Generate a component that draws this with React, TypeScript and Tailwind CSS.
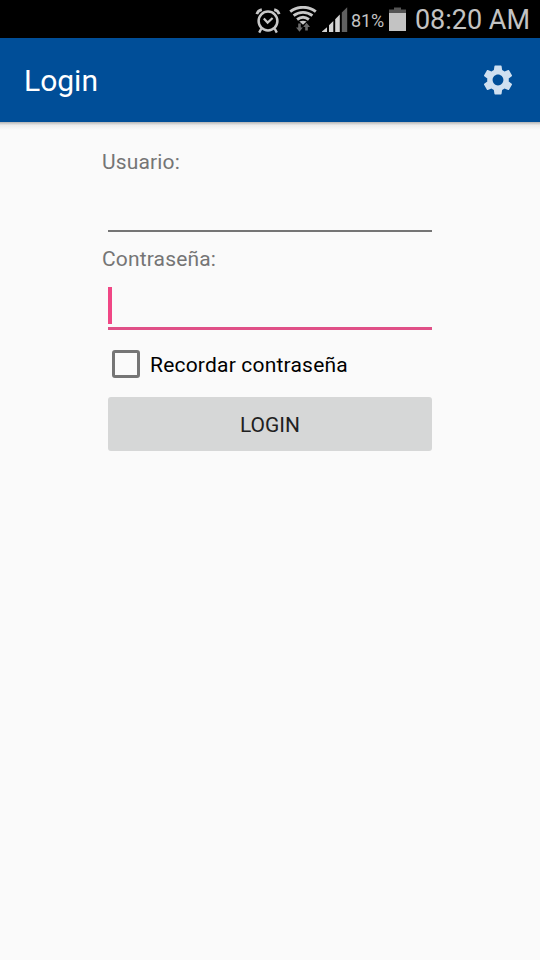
import { useState } from "react";
import { MdSettings } from "react-icons/md";

function AlarmIcon() {
  return (
    <svg width="26" height="27" viewBox="0 0 26 27" fill="none" stroke="#c8c8c8">
      <circle cx="13" cy="14" r="9.4" strokeWidth="2.5" />
      <path d="M8.8 11.6 12.6 15.6 17.6 11" strokeWidth="2.2" />
      <path d="M1.8 7.2C2.5 4.8 4.2 3.1 6.8 2.6M24.2 7.2C23.5 4.8 21.8 3.1 19.2 2.6" strokeWidth="2.7" />
      <path d="M6.4 21.5 4.2 25.6M19.6 21.5 21.8 25.6" strokeWidth="2.4" />
    </svg>
  );
}

function WifiIcon() {
  return (
    <svg width="28" height="27" viewBox="0 0 28 27" fill="none">
      <g stroke="#c8c8c8" strokeWidth="2.9">
        <path d="M1.2 5.6C8.6 -0.1 19.4 -0.1 26.8 5.6" />
        <path d="M4.6 9.6C10.2 5.3 17.8 5.3 23.4 9.6" />
        <path d="M8.1 13.5C11.7 10.8 16.3 10.8 19.9 13.5" />
      </g>
      <path d="M10.4 15.6C12.6 14.4 15.4 14.4 17.6 15.6L14 18.8Z" fill="#c8c8c8" />
      <path d="M9.2 17.5H11.8V21.6H13.8L10.5 25.8 7 21.6H9.2Z" fill="#6b6b6b" />
      <path d="M16.2 24.6H18.8V21H21L17.5 16.8 14.2 21H16.2Z" fill="#6b6b6b" />
    </svg>
  );
}

function SignalIcon() {
  return (
    <svg width="26" height="26" viewBox="0 0 26 26" fill="#d4d4d4">
      <path d="M0 25V24.6L5 20.2V25Z" />
      <path d="M7 25V18.2L11.3 14V25Z" />
      <path d="M13.2 25V12.2L17.8 7.6V25Z" />
      <path d="M19.8 25V5.6L25.2 0.2V25Z" fill="#606060" />
    </svg>
  );
}

function BatteryIcon() {
  return (
    <svg width="17" height="25" viewBox="0 0 17 25">
      <path d="M5 0.5H12V2.5H17V7H0V2.5H5Z" fill="#555" />
      <path d="M0 6H17V24H0Z" fill="#c3c3c3" />
    </svg>
  );
}

function StatusBar() {
  return (
    <div className="flex h-[38px] items-center justify-end bg-black pr-[10px] text-[#c3c3c3]">
      <div className="pt-[3px]">
        <AlarmIcon />
      </div>
      <div className="ml-2">
        <WifiIcon />
      </div>
      <div className="ml-[5px] pt-[2px]">
        <SignalIcon />
      </div>
      <span className="ml-[3px] w-[34px] pt-[4px] text-[18px] leading-none tracking-[-0.1px] whitespace-nowrap">81%</span>
      <div className="ml-[4px] pt-px">
        <BatteryIcon />
      </div>
      <span className="ml-[9px] pt-[3px] text-[27px] leading-none whitespace-nowrap">08:20 AM</span>
    </div>
  );
}

export default function App() {
  const [remember, setRemember] = useState(false);

  return (
    <div className="flex h-[960px] w-[540px] flex-col overflow-hidden bg-[#fafafa] font-[Roboto,sans-serif]">
      <StatusBar />

      {/* Toolbar */}
      <header className="flex h-[84px] shrink-0 items-center justify-between bg-[#004e98] pr-6 pl-6">
        <h1 className="pt-0.5 text-[30px] leading-9 text-white">Login</h1>
        <button type="button" aria-label="Ajustes" className="text-[#d0e0f0]">
          <MdSettings className="size-9" />
        </button>
      </header>
      <div className="h-2 shrink-0 bg-gradient-to-b from-[#b4b4b4] via-[#ececec] via-40% to-[#fafafa]" />

      {/* Login form */}
      <form className="mx-auto flex w-[336px] flex-col pt-5">
        <label className="text-[21px] leading-[25px] tracking-[0.15px] text-[#757575]">Usuario:</label>
        <div className="mx-1.5 h-[57px] border-b-2 border-[#757575]" />

        <label className="mt-[15px] text-[21px] leading-[25px] tracking-[0.15px] text-[#757575]">Contraseña:</label>
        <div className="mx-1.5 flex h-[58px] items-end border-b-3 border-[#e04f87] pb-[3px]">
          <span className="h-[37px] w-1 bg-[#f04785]" />
        </div>

        <label className="mx-[10px] mt-5 flex h-7 items-center text-[21px] leading-7 tracking-[0.2px] text-black">
          <input
            type="checkbox"
            checked={remember}
            onChange={(e) => setRemember(e.target.checked)}
            className="mr-[10px] size-7 appearance-none rounded-[3px] border-3 border-[#757575] checked:bg-[#757575]"
          />
          <span className="pt-0.5">Recordar contraseña</span>
        </label>

        <button
          type="button"
          className="mx-1.5 mt-[19px] h-[54px] rounded-[3px] bg-[#d6d7d7] pt-0.5 text-[21px] leading-[25px] text-[#212121]"
        >
          LOGIN
        </button>
      </form>
    </div>
  );
}
